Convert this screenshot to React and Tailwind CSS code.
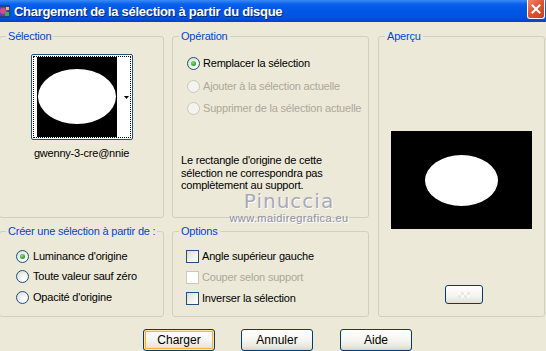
import React from "react";

const Radio = ({ checked, disabled }) => (
  <span
    className={
      "relative flex h-[13px] w-[13px] shrink-0 items-center justify-center rounded-full border " +
      (disabled
        ? "border-[#CAC8BB] bg-[#F4F3EE]"
        : "border-[#1C5180] bg-[radial-gradient(circle_at_65%_70%,#ffffff_10%,#ECEBE4_55%,#D6D4C8_100%)]")
    }
  >
    {checked && (
      <span className="h-[5px] w-[5px] rounded-full bg-[radial-gradient(circle_at_40%_35%,#8CE37A_0%,#2DA82D_60%,#17801A_100%)]" />
    )}
  </span>
);

const Check = ({ disabled }) => (
  <span
    className={
      "h-[13px] w-[13px] shrink-0 border " +
      (disabled
        ? "border-[#CAC8BB] bg-white"
        : "border-[#1C5180] bg-[linear-gradient(135deg,#DCDBD2_0%,#F3F2EC_55%,#ffffff_100%)]")
    }
  />
);

const Option = ({ children, disabled, control, gap = "gap-[3px]" }) => (
  <div className={"flex h-[13px] items-center whitespace-nowrap " + gap}>
    {control}
    <span className={disabled ? "text-[#ACA899]" : "text-black"}>{children}</span>
  </div>
);

const Group = ({ label, className, children }) => (
  <fieldset className={"m-0 min-w-0 rounded-[3px] border border-[#D0D0BF] p-0 " + className}>
    <legend className="ml-[6px] whitespace-nowrap px-[2px] leading-[13px] text-[#0046D5]">{label}</legend>
    {children}
  </fieldset>
);

const Button = ({ children, primary }) => (
  <button
    className={
      "h-[22px] w-[72px] rounded-[3px] border border-[#003C74] bg-[linear-gradient(#FFFFFF_0%,#F6F5F0_50%,#E8E6DC_85%,#D6D0C5_100%)] text-[12px] leading-none text-black " +
      (primary ? "shadow-[inset_0_0_0_1px_#FFE7A2,inset_0_0_0_2px_#F5B33A]" : "")
    }
  >
    {children}
  </button>
);

export default function App() {
  return (
    <div className="relative flex h-[351px] w-[546px] flex-col overflow-hidden bg-[#ECE9D8] font-['Liberation_Sans',Tahoma,sans-serif] text-[11px] leading-[13px] tracking-[-0.2px]">
      {/* title bar */}
      <div className="flex h-[22px] shrink-0 items-center bg-[linear-gradient(#3A8CF9_0%,#0B62EA_18%,#0056E6_45%,#0053E1_80%,#0043C6_100%)]">
        <svg width="11" height="14" viewBox="0 0 11 14" className="ml-0 mt-[1px]">
          <rect x="-5" y="0" width="15" height="13" rx="1" fill="#2B3F7A" />
          <rect x="-3" y="2" width="11" height="9" fill="#6B3FA8" />
          <circle cx="3" cy="6" r="3" fill="#D94A8C" />
          <rect x="5" y="7" width="4" height="4" fill="#3DB04A" />
          <rect x="6" y="2" width="3" height="3" fill="#F2C230" />
        </svg>
        <span className="ml-[3px] font-['Liberation_Sans',sans-serif] text-[13px] font-bold tracking-[-0.3px] text-white [text-shadow:1px_1px_0_#0A246A]">
          Chargement de la sélection à partir du disque
        </span>
        <div className="ml-auto mr-[1px] flex h-[19px] w-[18px] items-center justify-center self-start rounded-b-[3px] border border-t-0 border-white bg-[linear-gradient(135deg,#F0876A_0%,#E0522D_50%,#C9401E_100%)]">
          <svg width="10" height="10" viewBox="0 0 10 10">
            <path d="M1.5 1.5 L8.5 8.5 M8.5 1.5 L1.5 8.5" stroke="white" strokeWidth="2" strokeLinecap="square" />
          </svg>
        </div>
      </div>

      {/* groups */}
      <div className="-ml-px mt-[8px] grid grid-cols-[165px_197px_168px] grid-rows-[188px_92px] gap-x-[8px] gap-y-[7px]">
        <Group label="Sélection">
          <div className="mx-auto mt-[11px] h-[86px] w-[102px] rounded-[2px] border border-[#1C5180] bg-white p-px">
            <div className="flex h-full border border-dotted border-black">
              <div className="ml-[3px] h-[80px] w-[80px] bg-black">
                <svg width="80" height="80" viewBox="0 0 80 80">
                  <ellipse cx="40" cy="39.5" rx="39" ry="27.5" fill="white" />
                </svg>
              </div>
              <div className="flex flex-1 items-center justify-end pr-px">
                <svg width="5" height="3" viewBox="0 0 5 3">
                  <path d="M0 0 H5 L2.5 3 Z" fill="black" />
                </svg>
              </div>
            </div>
          </div>
          <div className="mt-[7px] text-center">gwenny-3-cre@nnie</div>
        </Group>

        <Group label="Opération">
          <div className="ml-[14px] mt-[14px] flex flex-col">
            <Option control={<Radio checked />}>Remplacer la sélection</Option>
            <div className="mt-[10px]">
              <Option disabled control={<Radio disabled />}>Ajouter à la sélection actuelle</Option>
            </div>
            <div className="mt-[9px]">
              <Option disabled control={<Radio disabled />}>Supprimer de la sélection actuelle</Option>
            </div>
          </div>
          <p className="ml-[8px] mt-[39px] leading-[12.5px]">
            Le rectangle d'origine de cette
            <br />
            sélection ne correspondra pas
            <br />
            complètement au support.
          </p>
        </Group>

        <Group label="Aperçu" className="row-span-2 ml-px">
          <div className="mx-auto mt-[88px] h-[98px] w-[141px] bg-black">
            <svg width="141" height="98" viewBox="0 0 141 98">
              <ellipse cx="70.5" cy="49.5" rx="36.5" ry="25.5" fill="white" />
            </svg>
          </div>
          <div className="ml-[66px] mt-[56px] h-[19px] w-[38px] rounded-[3px] border border-[#003C74] bg-[linear-gradient(#FFFFFF_0%,#F4F3EE_60%,#E2DFD4_100%)]">
            <div className="ml-[12px] mt-[6px] flex h-[6px] w-[12px] flex-wrap opacity-60">
              <span className="h-[3px] w-[3px] bg-white" />
              <span className="h-[3px] w-[3px] bg-[#E4E2DA]" />
              <span className="h-[3px] w-[3px] bg-white" />
              <span className="h-[3px] w-[3px] bg-[#E4E2DA]" />
              <span className="h-[3px] w-[3px] bg-[#E4E2DA]" />
              <span className="h-[3px] w-[3px] bg-white" />
              <span className="h-[3px] w-[3px] bg-[#E4E2DA]" />
              <span className="h-[3px] w-[3px] bg-white" />
            </div>
          </div>
        </Group>

        <Group label="Créer une sélection à partir de :">
          <div className="ml-[16px] mt-[12px] flex flex-col gap-[7px]">
            <Option gap="gap-[4px]" control={<Radio checked />}>Luminance d'origine</Option>
            <Option gap="gap-[4px]" control={<Radio />}>Toute valeur sauf zéro</Option>
            <div className="mt-px">
              <Option gap="gap-[4px]" control={<Radio />}>Opacité d'origine</Option>
            </div>
          </div>
        </Group>

        <Group label="Options">
          <div className="ml-[13px] mt-[12px] flex flex-col gap-[8px]">
            <Option control={<Check />}>Angle supérieur gauche</Option>
            <Option disabled control={<Check disabled />}>Couper selon support</Option>
            <Option control={<Check />}>Inverser la sélection</Option>
          </div>
        </Group>
      </div>

      {/* buttons */}
      <div className="mt-[12px] flex pl-[143px] tracking-normal">
        <Button primary>Charger</Button>
        <div className="ml-[26px]">
          <Button>Annuler</Button>
        </div>
        <div className="ml-[27px]">
          <Button>Aide</Button>
        </div>
      </div>

      {/* watermark */}
      <div className="pointer-events-none absolute left-[226px] top-[191px] flex w-[126px] flex-col items-center tracking-normal">
        <span className="font-['DejaVu_Sans',sans-serif] text-[20px] leading-[20px] tracking-[1px] text-[#A8A8BC] [text-shadow:1px_1px_0_#ffffff]">
          Pinuccia
        </span>
        <span className="mt-[2px] font-['Liberation_Sans',sans-serif] text-[11px] leading-[11px] tracking-[0.4px] text-[#8E8EA4] [text-shadow:1px_1px_0_#ffffff]">
          www.maidiregrafica.eu
        </span>
      </div>
    </div>
  );
}
